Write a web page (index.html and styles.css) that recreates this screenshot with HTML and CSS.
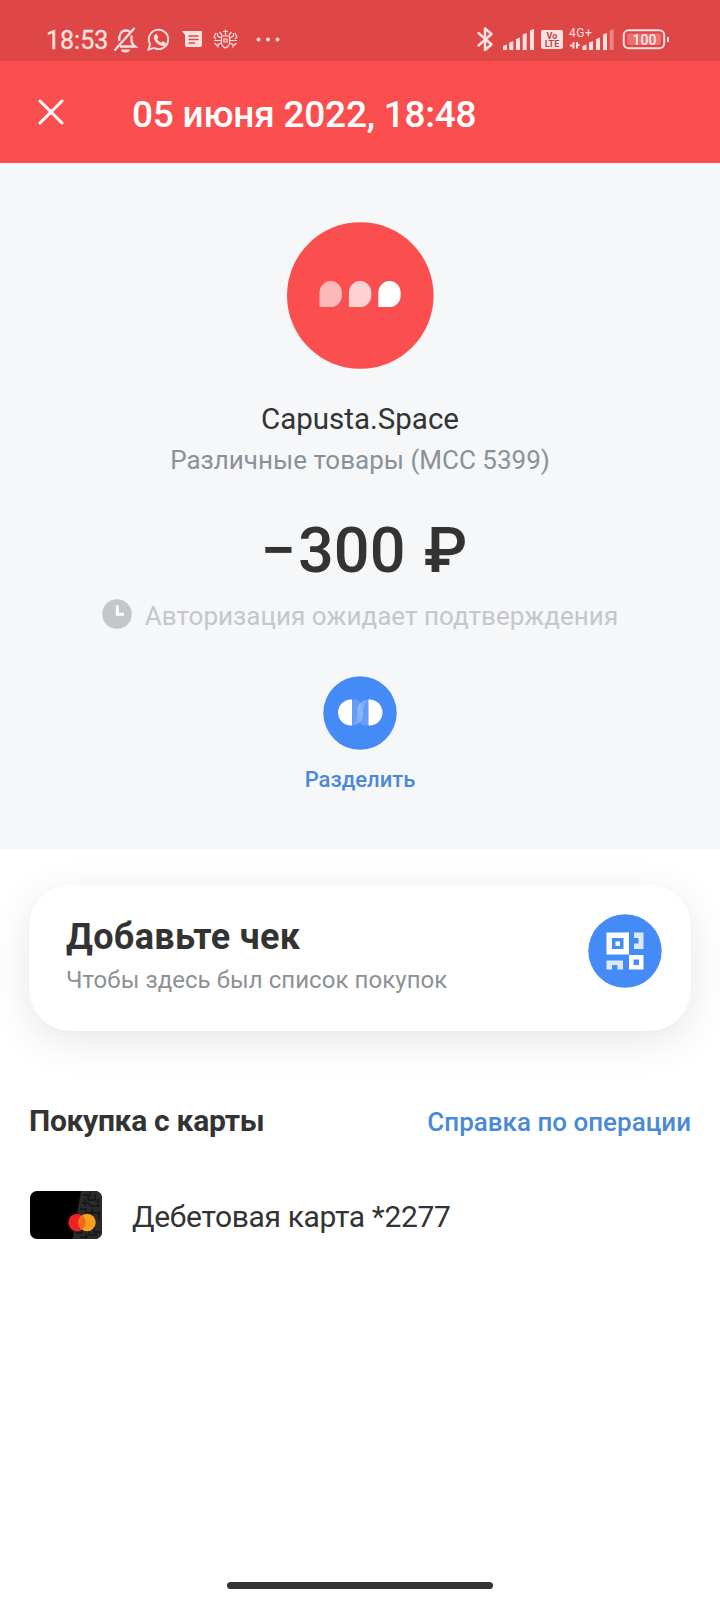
FILE: index.html
```html
<!DOCTYPE html>
<html lang="ru">
<head>
<meta charset="utf-8">
<title>Операция</title>
<link rel="stylesheet" href="styles.css">
</head>
<body>
<div class="screen">
  <div class="status">
    <span class="status-time">18:53</span>
    <svg class="status-left" width="170" height="30" viewBox="113 24 170 30" fill="none" stroke="#ffe1e0" stroke-width="2">
      <path d="M120 46.500H135q-3.500-2.500-3.500-7V35.500" stroke-width="2.300"/>
      <path d="M114.500 50.500L134.500 28" stroke-width="2.300"/>
      <path d="M119.300 41c-.8-6 2-10.500 6.700-10.500 2 0 3.300.6 4.300 1.600" stroke-width="2.300"/>
      <path d="M121 49.500h9a4.500 3 0 0 1-9 0z" fill="#ffe1e0" stroke="none"/>
      <path d="M148.500 49.500l1.600-5.300a9.700 9.700 0 1 1 3.800 3.700z" stroke-width="1.900"/>
      <path d="M154.700 34.700l2-.6 1.700 3.500-1.300 1.600q1.300 2.500 4 3.600l1.500-1.500 3.300 1.700c.2 3-3 3.500-5.500 2.300-3.800-1.700-6.600-5.300-6.700-8.400z" fill="#ffe1e0" stroke="none"/>
      <path d="M182 31h19.500q.500 0 .500.500V45q0 2-2 2h-13q-2 0-2-2V35z" fill="#ffe1e0" stroke="none"/>
      <path d="M188.500 36h10M188.500 39.500h10M188.500 43h6.500" stroke="#df4646" stroke-width="1.500"/>
      <g stroke-width="1.200">
        <path d="M221.500 36h8v7q0 3-4 5-4-2-4-5z"/>
        <path d="M223 31.500h5M225.500 29.500v6M222 35l-2.500-3M229 35l2.500-3M221 38l-3.500-2v-3M230 38l3.500-2v-3M221 40.500h-7M230 40.500h7M221.500 43l-3.500 1.500v3M229.500 43l3.500 1.500v3M216 33l-2 4 2 2M235 33l2 4-2 2M214.500 43l2.500 2.500M236.500 43l-2.500 2.500"/>
        <path d="M224 39h3v3h-3z"/>
      </g>
      <g fill="#ffe1e0" stroke="none"><circle cx="258.500" cy="39.500" r="1.900"/><circle cx="268" cy="39.500" r="1.900"/><circle cx="277.500" cy="39.500" r="1.900"/></g>
    </svg>
    <svg class="status-right" width="198" height="30" viewBox="474 24 198 30" fill="none">
      <path d="M478.500 33L491.500 44.500 485 50V28.500l6.500 5.500-13 11.500" stroke="#ffe1e0" stroke-width="2.500" stroke-linejoin="round" stroke-linecap="round"/>
      <path d="M503 46l4-1.500V50h-4zM509.300 42.500l4-1.500v9h-4zM516 39l4-1.500V50h-4zM522.700 34.500l4-1.500v17h-4zM530 30.500l4-1.500v21h-4z" fill="#ffe1e0"/>
      <rect x="541" y="30" width="22" height="19" rx="2" fill="#ffe1e0"/>
      <text class="volte" x="552" y="38.500">Vo</text>
      <text class="volte" x="552" y="47">LTE</text>
      <text class="net" x="569" y="37">4G+</text>
      <path d="M573.500 42v6.500M570 45.500h3.500M577 48.500V42M577 45h2.500" stroke="#ffe1e0" stroke-width="2"/>
      <path d="M582.500 46l4-1.500V50h-4zM589 42.500l4-1.500v9h-4zM596 39l4-1.500V50h-4zM603 34.500l4-1.500v17h-4z" fill="#ffe1e0"/>
      <path d="M609.700 30.500l4-1.500v21h-4z" fill="#ffe1e0" opacity=".4"/>
      <rect x="623.700" y="30.200" width="40.500" height="18" rx="5" stroke="#ffe1e0" stroke-width="2"/>
      <rect x="627" y="33.500" width="34" height="11.500" rx="2" fill="#ec7070"/>
      <path d="M668 37v5" stroke="#ffe1e0" stroke-width="2"/>
      <text class="battery" x="644.500" y="45">100</text>
    </svg>
  </div>

  <header class="header">
    <svg class="close" width="26" height="26" viewBox="0 0 26 26"><path d="M2 2L24 24M24 2L2 24" stroke="#fff" stroke-width="3" stroke-linecap="round"/></svg>
    <h1 class="header-title">05 июня 2022, 18:48</h1>
  </header>

  <section class="hero">
    <svg class="logo" width="147" height="147" viewBox="0 0 147 147">
      <circle cx="73.300" cy="73.500" r="73.300" fill="#fb4e4e"/>
      <g fill="#fff">
        <path d="M32.500 85V70.700a11.200 11.700 0 0 1 22.400 0V73.500a11.200 11.500 0 0 1-11.200 11.500z" opacity=".6"/>
        <path d="M61.900 85V70.700a11.200 11.700 0 0 1 22.400 0V73.500a11.200 11.500 0 0 1-11.200 11.500z" opacity=".75"/>
        <path d="M91.300 85V70.700a11.200 11.700 0 0 1 22.400 0V73.500a11.200 11.500 0 0 1-11.200 11.500z"/>
      </g>
    </svg>
    <div class="name">Capusta.Space</div>
    <div class="category">Различные товары (MCC 5399)</div>
    <div class="amount"><span class="sign">−</span>300 ₽</div>
    <div class="pending">
      <svg width="30" height="30" viewBox="0 0 30 30"><circle cx="15" cy="15" r="14.800" fill="#c3c7cc"/><path d="M15.300 6.500V15.300H22" fill="none" stroke="#fff" stroke-width="3"/></svg>
      <span>Авторизация ожидает подтверждения</span>
    </div>
    <svg class="split" width="74" height="74" viewBox="0 0 74 74">
      <defs>
        <linearGradient id="band" x1="0" y1="1" x2="1" y2="0"><stop offset="0" stop-color="#fff" stop-opacity=".2"/><stop offset=".5" stop-color="#fff" stop-opacity=".38"/><stop offset="1" stop-color="#fff" stop-opacity=".2"/></linearGradient>
      </defs>
      <circle cx="37" cy="37" r="36.700" fill="#458bf7"/>
      <path d="M29 23.500h4q4 1 5.500 5-4 4-4 10 0 7-5.500 11zM45.500 49.500h-4q-4-1-5.500-4.500 4-4 4-10 0-8 5.500-11.500z" fill="#fff" opacity=".16"/>
      <path d="M29 49.500q5.500-4 5.500-13 0-12 11-13-5.500 4-5.500 13 0 12-11 13z" fill="url(#band)"/>
      <path d="M29 23.500V49.500H28a13 13 0 0 1 0-26zM45.500 23.500V49.500h1a13 13 0 0 0 0-26z" fill="#fff"/>
    </svg>
    <div class="split-label">Разделить</div>
  </section>

  <main class="content">
    <section class="receipt">
      <div>
        <h2 class="receipt-title">Добавьте чек</h2>
        <p class="receipt-sub">Чтобы здесь был список покупок</p>
      </div>
      <svg class="qr" width="74" height="74" viewBox="0 0 74 74">
        <circle cx="37" cy="37" r="36.700" fill="#458bf7"/>
        <path fill="#fff" fill-rule="evenodd" d="M18.500 18.500h22.500v22h-22.500zM24 24v11h11.500V24zM27.500 27.500h4.500v4.500h-4.500zM41 41h14.500v14.500H41zM45.500 45.500v5.500h5.500v-5.500z"/>
        <path fill="#dce9fd" d="M46 18.500h9.500V35H46v-5.500h4.500V24H46zM18.500 46.500H35v9h-5.500V51H24v4.500h-5.500z"/>
      </svg>
    </section>

    <div class="row">
      <h3 class="source">Покупка с карты</h3>
      <a class="help">Справка по операции</a>
    </div>

    <div class="account">
      <svg class="bankcard" width="72" height="48" viewBox="0 0 72 48">
        <defs><clipPath id="face"><rect width="72" height="48" rx="7"/></clipPath></defs>
        <g clip-path="url(#face)">
          <rect width="72" height="48"/>
          <path d="M51 0H72V48H42.500z" fill="#2a2a2a"/>
          <path d="M53 4h5v5h7V3M52 12h6l3 3h8M50 18h6v4h12M60 0v6M68 8v8M62 18v5M46 42h6v-3h7v5h8M56 48v-5M64 36v5h6M69 20v8M50 46h8M55 8v7" fill="none" stroke="#141414" stroke-width="1.400"/>
          <circle cx="47" cy="31.500" r="8.700" fill="#ee2027"/>
          <circle cx="57" cy="31.500" r="8.700" fill="#f9a01f"/>
          <path d="M52 24.400a8.700 8.700 0 0 1 0 14.200a8.700 8.700 0 0 1 0-14.200z" fill="#f36a1f"/>
        </g>
      </svg>
      <span class="account-name">Дебетовая карта *2277</span>
    </div>
  </main>
  <div class="homebar"></div>
</div>
</body>
</html>
```
FILE: styles.css
```css
* { box-sizing: border-box; margin: 0; padding: 0; }
body { font-family: Roboto, "Liberation Sans", sans-serif; color: #333; background: #fff; }
.screen { width: 720px; height: 1600px; display: flex; flex-direction: column; overflow: hidden; white-space: nowrap; }

.status { height: 61px; background: #df4646; display: flex; align-items: flex-start; padding: 24px 48px 0 46px; }
.status-time { width: 67px; font-size: 25px; line-height: 33px; color: #ffe1e0; -webkit-text-stroke: .3px #ffe1e0; }
.status-right { margin-left: auto; }
.volte { font: 700 9px Roboto, sans-serif; fill: #b84848; text-anchor: middle; }
.net { font: 400 12px Roboto, sans-serif; fill: #ffe1e0; letter-spacing: .6px; }
.battery { font: 500 14px Roboto, sans-serif; fill: #ffe9e8; text-anchor: middle; }

.header { height: 102px; background: #fb4e4e; display: flex; align-items: flex-start; padding: 30px 38px 0; color: #fff; }
.close { margin-top: 8px; }
.header-title { margin-left: 68px; font-size: 37px; line-height: 48px; font-weight: 500; letter-spacing: -.23px; }

.hero { height: 686px; background: #f5f7f9; display: flex; flex-direction: column; align-items: center; padding-top: 59px; }
.logo { flex: none; }
.name { margin-top: 30px; height: 40px; line-height: 40px; font-size: 29.5px; }
.category { margin-top: 1px; height: 40px; line-height: 41px; font-size: 26px; color: #8b9297; }
.amount { margin-top: 30px; height: 80px; padding-left: 8px; line-height: 82px; font-size: 63px; font-weight: 500; word-spacing: 3px; }
.sign { margin-right: 2px; }
.pending { margin-top: 6px; height: 40px; display: flex; gap: 13px; line-height: 41px; font-size: 26px; letter-spacing: .04px; color: #c4c7cc; }
.pending svg { margin-top: 3px; }
.split { margin-top: 40px; flex: none; }
.split-label { margin-top: 14px; line-height: 32px; font-size: 22px; font-weight: 500; color: #4a89d6; }

.content { padding: 36px 29px 0; }
.receipt { height: 146px; border-radius: 42px; background: #fff; box-shadow: 0 10px 40px rgba(0,0,0,.1); display: flex; justify-content: space-between; padding: 29px 29px 0 37px; }
.receipt-title { font-size: 36px; line-height: 46px; font-weight: 700; letter-spacing: .35px; }
.receipt-sub { font-size: 24px; line-height: 40px; color: #8d9194; letter-spacing: .06px; }
.row { margin-top: 70px; display: flex; justify-content: space-between; line-height: 40px; }
.source { font-size: 30px; font-weight: 700; letter-spacing: -.3px; }
.help { font-size: 26px; line-height: 42px; font-weight: 500; color: #4a89d6; }
.account { margin-top: 48px; display: flex; align-items: flex-start; gap: 30px; padding-left: 1px; font-size: 30px; }
.account-name { line-height: 51px; letter-spacing: -.34px; }
.homebar { width: 266px; height: 7px; border-radius: 4px; background: #333; margin: auto auto 11px; }
```
